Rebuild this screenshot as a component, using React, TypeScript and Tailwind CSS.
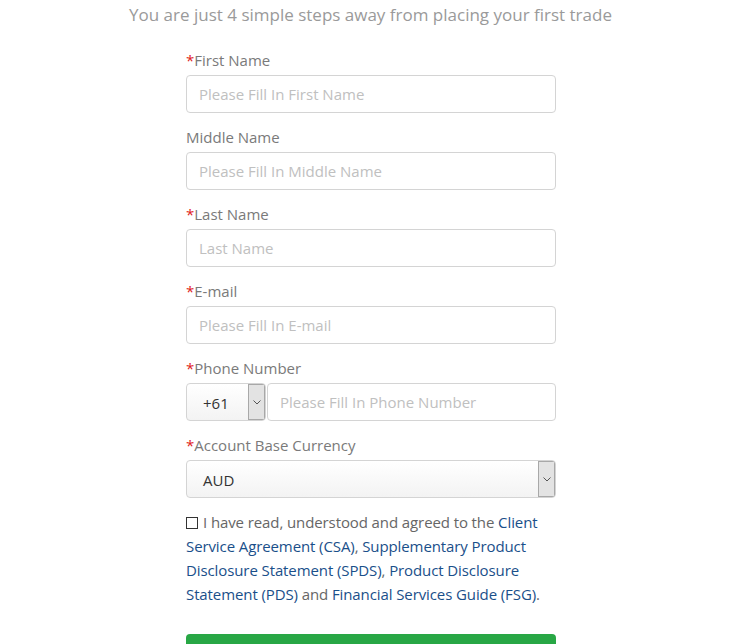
import React from "react";

const font = { fontFamily: '"Open Sans", "Noto Sans", sans-serif' };

function Label({ text, req }: { text: string; req?: boolean }) {
  return (
    <div className="text-[15px] leading-[21px] text-[#7a7a7a] mb-[4px]">
      {req && <span className="text-[#e02020]">*</span>}
      {text}
    </div>
  );
}

function Input({ ph }: { ph: string }) {
  return (
    <input
      placeholder={ph}
      className="w-full h-[38px] border border-[#d4d4d4] rounded-[4px] px-[12px] text-[15px] text-[#555] placeholder:text-[#c0c0c0] outline-none"
    />
  );
}

function Arrow() {
  return (
    <div className="w-[17px] self-stretch bg-[#e3e3e3] border border-[#a8a8a8] flex items-center justify-center">
      <svg width="8" height="5" viewBox="0 0 8 5">
        <path d="M0.5 0.5 L4 4 L7.5 0.5" fill="none" stroke="#555" strokeWidth="1" />
      </svg>
    </div>
  );
}

export default function App() {
  return (
    <div className="bg-white w-[741px] h-[644px] overflow-hidden" style={font}>
      <div className="text-center text-[17px] leading-[26px] text-[#9a9a9a] pt-[2px]">
        You are just 4 simple steps away from placing your first trade
      </div>
      <div className="w-[370px] ml-[186px] mt-[22px]">
        <Label text="First Name" req />
        <Input ph="Please Fill In First Name" />
        <div className="h-[14px]" />
        <Label text="Middle Name" />
        <Input ph="Please Fill In Middle Name" />
        <div className="h-[14px]" />
        <Label text="Last Name" req />
        <Input ph="Last Name" />
        <div className="h-[14px]" />
        <Label text="E-mail" req />
        <Input ph="Please Fill In E-mail" />
        <div className="h-[14px]" />
        <Label text="Phone Number" req />
        <div className="flex h-[38px]">
          <div className="w-[80px] flex border border-[#d4d4d4] rounded-[4px] bg-gradient-to-b from-white to-[#f3f3f3] overflow-hidden">
            <div className="flex-1 flex items-center pl-[16px] text-[15px] text-[#333] pt-[2px]">+61</div>
            <Arrow />
          </div>
          <input
            placeholder="Please Fill In Phone Number"
            className="flex-1 ml-[1px] h-[38px] border border-[#d4d4d4] rounded-[4px] px-[12px] text-[15px] placeholder:text-[#c0c0c0] outline-none"
          />
        </div>
        <div className="h-[14px]" />
        <Label text="Account Base Currency" req />
        <div className="flex h-[38px] border border-[#d4d4d4] rounded-[4px] bg-gradient-to-b from-white to-[#f3f3f3] overflow-hidden">
          <div className="flex-1 flex items-center pl-[16px] text-[15px] text-[#333] pt-[2px]">AUD</div>
          <Arrow />
        </div>
        <div className="mt-[12px] text-[15px] tracking-[-0.1px] leading-[24px] text-[#666]">
          <span className="inline-block w-[12px] h-[12px] border border-[#333] mr-[5px] align-[-1px]" />
          I have read, understood and agreed to the{" "}
          <span className="text-[#1a4f8a]">Client Service Agreement (CSA)</span>,{" "}
          <span className="text-[#1a4f8a]">Supplementary Product Disclosure Statement (SPDS)</span>,{" "}
          <span className="text-[#1a4f8a]">Product Disclosure Statement (PDS)</span> and{" "}
          <span className="text-[#1a4f8a]">Financial Services Guide (FSG)</span>.
        </div>
        <div className="mt-[28px] h-[40px] rounded-[4px] bg-[#28a745]" />
      </div>
    </div>
  );
}
